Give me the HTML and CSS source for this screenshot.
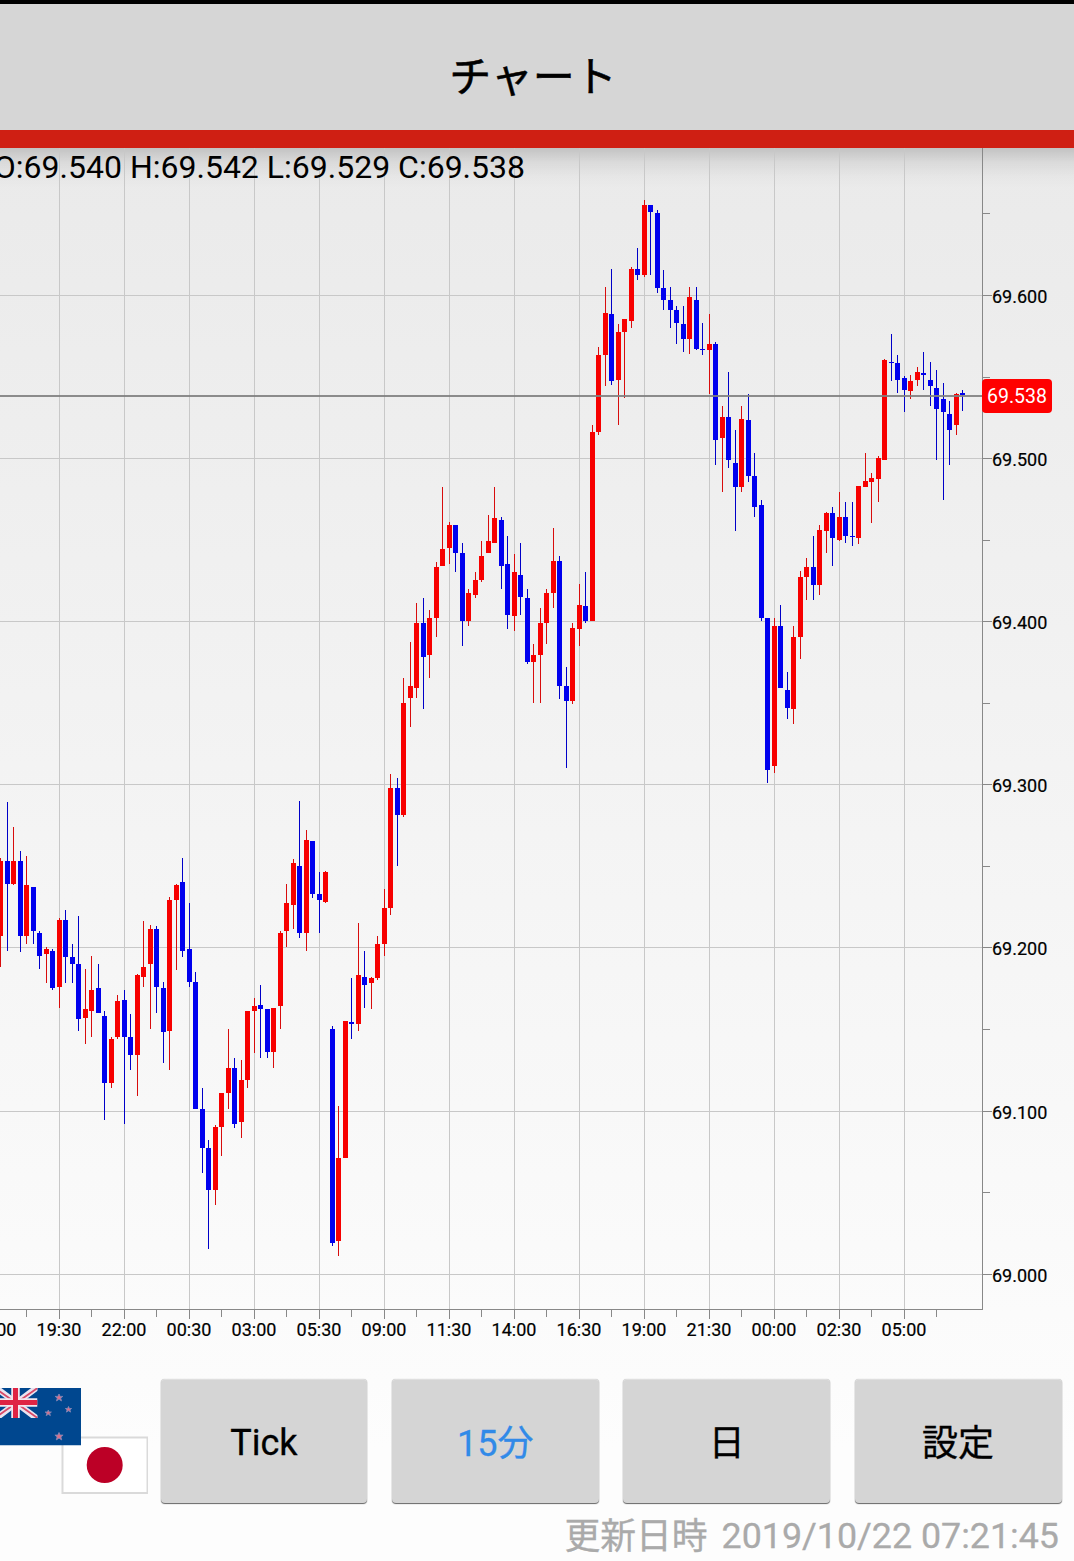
FILE: index.html
```html
<!DOCTYPE html>
<html lang="ja">
<head>
<meta charset="utf-8">
<title>チャート</title>
<link rel="stylesheet" href="styles.css">
</head>
<body>
<div class="screen">
  <header class="header"><h1 class="title">チャート</h1></header>
  <main class="chart-area">
    <svg class="chart" id="chart" viewBox="0 148 1074 1202" width="1074" height="1202">
      <text class="ohlc" x="525" y="178">O:69.540 H:69.542 L:69.529 C:69.538</text>
    </svg>
  </main>
  <nav class="toolbar">
    <div class="pair">
      <svg width="160" height="124" viewBox="0 1379 160 124">
        <rect x="61.5" y="1436.5" width="86.5" height="57.5" fill="#dadada"/>
        <rect x="63.5" y="1438.5" width="83" height="53.5" fill="#fff"/>
        <circle cx="104.7" cy="1465" r="18" fill="#bc0026"/>
        <svg x="-5" y="1388" width="86" height="57.5" viewBox="0 0 86 57.5">
          <rect width="86" height="57.5" fill="#00478f"/>
          <svg width="42.5" height="30" viewBox="0 0 42.5 30">
            <path d="M0 -1L42.5 31M42.5 -1L0 31" stroke="#e9e4f0" stroke-width="6"/>
            <path d="M0 0L42.5 30M42.5 0L0 30" stroke="#d84a68" stroke-width="1.8"/>
            <path d="M20.5 0V30M0 14.5H42.5" stroke="#f3e6ee" stroke-width="8.5"/>
            <path d="M20.5 0V30M0 14.5H42.5" stroke="#df2444" stroke-width="5"/>
          </svg>
          <g fill="#d8708c" stroke="#7f86b4" stroke-width=".9">
            <path d="M64 6l1.1 2.4h2.7l-2.1 1.7.8 2.8-2.5-1.6-2.5 1.6.8-2.8-2.1-1.7h2.7z"/>
            <path d="M73.500 18.500l.9 2h2.200l-1.700 1.400.7 2.200-2.100-1.300-2.100 1.300.7-2.200-1.700-1.400h2.200z"/>
            <path d="M53.300 22l.9 2h2.200l-1.700 1.400.7 2.200-2.100-1.300-2.100 1.300.7-2.200-1.700-1.400h2.200z"/>
            <path d="M64 44.500l1.200 2.600h2.900l-2.200 1.800.8 3-2.700-1.700-2.700 1.700.8-3-2.200-1.800h2.900z"/>
          </g>
        </svg>
      </svg>
    </div>
    <div class="buttons">
      <button class="btn btn-latin">Tick</button>
      <button class="btn btn-active">15分</button>
      <button class="btn">日</button>
      <button class="btn">設定</button>
    </div>
  </nav>
  <footer class="updated"><span class="updated-label">更新日時</span><span>2019/10/22 07:21:45</span></footer>
</div>
<script src="chart.js"></script>
</body>
</html>
```
FILE: styles.css
```css
* { box-sizing: border-box; }
body {
  margin: 0;
  font-family: Roboto, "Noto Sans CJK JP", sans-serif;
  color: #000;
}
.screen {
  display: flex;
  flex-direction: column;
  width: 1074px;
  height: 1561px;
  overflow: hidden;
  background: linear-gradient(#eaeaea 148px, #fdfdfd 1450px);
}
.header {
  flex: none;
  height: 148px;
  display: flex;
  justify-content: center;
  align-items: center;
  padding: 22px 8px 0 0;
  background: #d6d6d6;
  border-top: 4px solid #000;
  border-bottom: 18px solid #cf1f13;
}
.title {
  margin: 0;
  font-size: 42px;
  line-height: 60px;
  font-weight: 400;
  -webkit-text-stroke: .5px #000;
}
.chart-area {
  flex: none;
  height: 1202px;
  background: linear-gradient(rgba(0,0,0,.17), rgba(0,0,0,.07) 14px, rgba(0,0,0,.02) 28px, transparent 40px);
}
.chart { display: block; }
.ohlc { font-size: 32px; text-anchor: end; }
.grid { fill: #c8c8c8; }
.axis { fill: #888; }
.price-line { fill: #808080; fill-opacity: .9; }
.axis-label { font-size: 18px; stroke: #000; stroke-width: .2px; }
.time { text-anchor: middle; }
.up { fill: #f70000; }
.down { fill: #0000ee; }
.up .wick { fill: #d80c0c; }
.down .wick { fill: #0000c8; }
.tag { fill: #f00; }
.tag-text { font-size: 19.5px; fill: #fff; text-anchor: middle; }
.toolbar {
  flex: none;
  display: flex;
  height: 153px;
  padding-top: 29px;
}
.pair { width: 160.5px; }
.pair svg { display: block; }
.buttons {
  display: grid;
  grid-template-columns: repeat(4, 1fr);
  column-gap: 24.5px;
  width: 901px;
}
.btn {
  height: 124px;
  border: 0;
  border-radius: 4px;
  padding: 0 0 2px;
  background: #d5d5d5;
  box-shadow: inset 0 1px 0 #dfdfdf, 0 1px 1px #666, 0 0 1px rgba(0,0,0,.3);
  font: inherit;
  font-size: 36px;
  color: #000;
  -webkit-text-stroke: .3px currentColor;
}
.btn-latin { padding: 3px 0 0; }
.btn-active { color: #318ae8; }
.updated {
  display: flex;
  justify-content: flex-end;
  gap: 14px;
  padding: 7px 15px 0 0;
  font-size: 35.8px;
  line-height: 52px;
  color: #aaa;
  white-space: nowrap;
  -webkit-text-stroke: .3px currentColor;
}
.updated-label { padding-top: 1px; }
```
FILE: chart.js
```js
// Each candle: direction, high, body top, body bottom, low (vertical chart units).
const candles = `R858,861,936,967 B802,861,884,951 R827,861,884,885 B851,861,936,952 R856,885,936,944
B887,887,931,944 B931,933,956,969 R947,949,954,983 B949,951,988,990 R918,920,987,1008
B910,920,957,983 B944,957,964,983 B916,964,1019,1031 R969,1009,1018,1044 R956,990,1011,1037
B964,988,1013,1013 B1011,1016,1083,1120 R1037,1039,1083,1088 R995,1001,1037,1039 B990,1000,1037,1124
B1014,1037,1055,1070 R974,975,1055,1096 R921,967,977,987 R925,929,964,1029 B926,929,987,1013
B982,988,1032,1063 R897,900,1031,1070 R884,885,900,970 B858,882,951,957 B903,949,982,987
B972,982,1109,1109 B1088,1109,1148,1173 B1140,1148,1190,1249 R1125,1127,1190,1205 R1093,1093,1127,1156
R1029,1068,1093,1109 B1058,1068,1124,1128 R1060,1080,1122,1138 R1011,1011,1080,1088 R998,1006,1011,1053
B985,1005,1009,1058 B1009,1009,1052,1058 R1008,1008,1052,1068 R931,933,1006,1029 R884,903,931,947
R859,863,905,929 B801,866,933,938 R830,840,933,951 B841,841,894,898 B872,894,900,933
R871,872,902,903 B1026,1029,1243,1246 R1106,1158,1241,1256 R1021,1021,1158,1158 B978,1022,1024,1039
R923,975,1024,1031 B951,977,985,1008 R977,978,983,1009 R936,944,978,980 R889,908,944,956
R774,788,908,915 B778,788,815,866 R678,703,815,817 R642,686,698,727 R603,623,688,698
B598,623,657,709 R610,618,655,678 R562,567,618,637 R487,549,566,566 R522,525,548,564
B525,525,553,572 B543,553,621,646 R589,593,621,626 R572,580,595,598 R541,556,580,582
R515,541,553,553 R487,518,543,543 B517,520,566,589 B536,564,615,629 R554,572,616,631
B543,575,597,615 B589,598,662,664 R644,655,662,703 R608,623,655,703 R589,593,623,644
R528,561,593,608 B556,561,686,699 B667,686,701,768 R623,628,701,704 R584,605,629,646
B572,606,621,623 R425,432,621,621 R347,355,432,435 R287,313,355,386 B269,314,381,385
R324,332,380,425 R319,319,332,398 R267,269,321,328 B248,269,275,280 R200,205,275,277
B205,205,212,275 B210,213,288,293 B270,288,300,310 B287,300,310,328 B306,310,323,344
B306,324,339,352 R287,297,339,354 B287,300,349,350 B323,349,350,355 R314,344,350,394
B342,344,440,465 R406,417,438,492 B372,417,460,468 B430,463,487,531 R406,419,487,492
B394,420,476,482 B453,476,507,517 B500,505,618,621 B618,618,770,783 R618,626,766,773
B605,626,688,688 B672,690,708,719 R626,637,709,724 R571,577,637,659 R558,567,577,600
B536,567,585,600 R525,530,585,595 R512,513,531,553 B507,513,538,566 R492,517,540,541
B502,517,536,543 B502,536,537,546 R486,486,538,544 R453,481,487,487 R473,478,482,523
R456,458,479,502 R359,360,460,460 B334,362,363,381 B355,363,380,393 B376,378,390,412
R375,381,391,399 R367,372,380,386 B352,373,375,390 B362,380,386,406 B370,388,409,460
B383,399,412,500 B401,414,430,465 R393,394,425,435 B390,393,395,411`.split(/\s+/);

const NS = "http://www.w3.org/2000/svg";
const chart = document.getElementById("chart");
const base = document.createElementNS(NS, "g");
chart.prepend(base);

function add(parent, name, attrs, text) {
  const el = document.createElementNS(NS, name);
  for (const key in attrs) el.setAttribute(key, attrs[key]);
  if (text) el.textContent = text;
  parent.append(el);
  return el;
}
function rect(parent, cls, x, y, width, height) {
  return add(parent, "rect", { class: cls, x, y, width, height });
}

// Grid, ticks and labels
const prices = [[295, "69.600"], [458, "69.500"], [621, "69.400"], [784, "69.300"],
  [947, "69.200"], [1111, "69.100"], [1274, "69.000"]];
const times = ["17:00", "19:30", "22:00", "00:30", "03:00", "05:30", "09:00", "11:30", "14:00",
  "16:30", "19:00", "21:30", "00:00", "02:30", "05:00"];
prices.forEach(([y, label]) => {
  rect(base, "grid", 0, y, 982, 1);
  rect(base, "axis", 983, y, 9, 1);
  add(base, "text", { class: "axis-label", x: 992, y: y + 8 }, label);
});
[213, 377, 540, 703, 866, 1029, 1192].forEach(y => rect(base, "axis", 983, y, 7, 1));
times.forEach((label, i) => {
  const x = i * 65 - 6;
  if (i) {
    rect(base, "grid", x, 148, 1, 1161);
    rect(base, "axis", x, 1309, 1, 10);
  }
  rect(base, "axis", x + 32, 1309, 1, 8);
  add(base, "text", { class: "axis-label time", x, y: 1336 }, label);
});
rect(base, "axis", 982, 148, 1, 1162);
rect(base, "axis", 0, 1309, 983, 1);

// Candlesticks
candles.forEach((entry, i) => {
  const [high, top, bottom, low] = entry.slice(1).split(",").map(Number);
  const x = Math.floor(59 + 6.5 * (i - 9));
  const g = add(base, "g", { class: entry[0] === "R" ? "up" : "down" });
  rect(g, "wick", x, high, 1, low - high);
  rect(g, "body", x - 2, top, 5, bottom - top);
});

// Current price
rect(base, "price-line", 0, 395, 983, 2);
add(base, "rect", { class: "tag", x: 982, y: 379, width: 70, height: 34, rx: 4 });
add(base, "text", { class: "tag-text", x: 1017, y: 403 }, "69.538");
```
